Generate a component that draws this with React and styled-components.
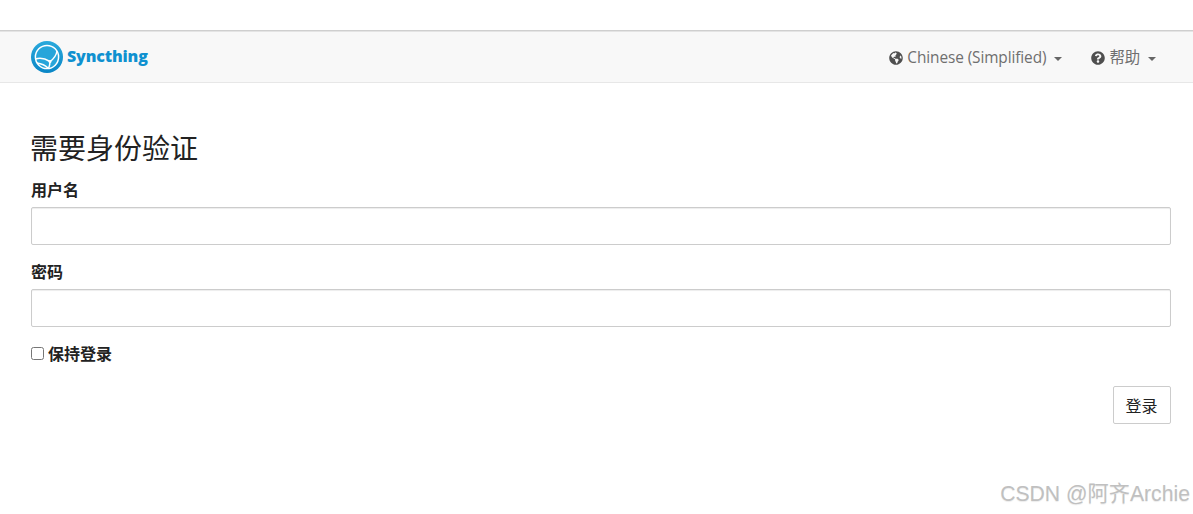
import styled, { createGlobalStyle } from "styled-components"
import { FaGlobeAmericas, FaQuestionCircle } from "react-icons/fa"

const GlobalStyle = createGlobalStyle`
  html, body {
    margin: 0;
    padding: 0;
    background: #fff;
  }
  body {
    font-family: "Open Sans", "Noto Sans CJK SC", "Liberation Sans", sans-serif;
    font-size: 16px;
    color: #222;
  }
`

const Logo = () => (
  <svg width="32" height="32" viewBox="0 0 32 32" aria-hidden="true">
    <defs>
      <linearGradient id="syncBlue" x1="0" y1="0" x2="0" y2="1">
        <stop offset="0" stopColor="#2aa9dc" />
        <stop offset="1" stopColor="#0a86c6" />
      </linearGradient>
    </defs>
    <circle cx="16" cy="16" r="16" fill="url(#syncBlue)" />
    <circle cx="16" cy="16" r="11.6" fill="#27a5da" stroke="#fff" strokeWidth="1.5" />
    <path
      d="M4.6 18C9 16.5 14 17.5 19 20.5C22.5 18 25.5 13.5 26 10M19 20.5C19 23 18.5 25 17.5 27.5M6 22C10 22.5 14 24 17.5 27.5"
      fill="none"
      stroke="#fff"
      strokeWidth="1.5"
    />
    <circle cx="19" cy="20.5" r="1.5" fill="#fff" />
  </svg>
)

const Page = () => (
  <Wrapper>
    <Navbar>
      <Brand href="#">
        <Logo />
        <BrandName>Syncthing</BrandName>
      </Brand>
      <NavMenu>
        <NavItem>
          <FaGlobeAmericas />
          <span>Chinese (Simplified)</span>
          <Caret />
        </NavItem>
        <NavItem>
          <FaQuestionCircle />
          <span>帮助</span>
          <Caret />
        </NavItem>
      </NavMenu>
    </Navbar>
    <Main>
      <Title>需要身份验证</Title>
      <Field>
        <Label htmlFor="user">用户名</Label>
        <Input id="user" type="text" />
      </Field>
      <Field>
        <Label htmlFor="password">密码</Label>
        <Input id="password" type="password" />
      </Field>
      <Remember>
        <input type="checkbox" />
        保持登录
      </Remember>
      <Actions>
        <Button type="button">登录</Button>
      </Actions>
    </Main>
    <Watermark>CSDN @阿齐Archie</Watermark>
  </Wrapper>
)

export default function App() {
  return (
    <>
      <GlobalStyle />
      <Page />
    </>
  )
}

const Wrapper = styled.div`
  position: relative;
  height: 514px;
  padding-top: 30px;
  box-sizing: border-box;
  overflow: hidden;
`

const Navbar = styled.nav`
  height: 53px;
  box-sizing: border-box;
  display: flex;
  align-items: center;
  justify-content: space-between;
  padding: 0 37px 0 31px;
  background: #f8f8f8;
  border-top: 1px solid #cfcfcf;
  border-bottom: 1px solid #e7e7e7;
  box-shadow: inset 0 1px 0 #e4e4e4;
`

const Brand = styled.a`
  display: flex;
  align-items: center;
  gap: 4px;
  text-decoration: none;
`

const BrandName = styled.span`
  margin-bottom: 2px;
  font-family: "Open Sans", sans-serif;
  font-weight: 800;
  font-size: 16px;
  letter-spacing: -0.15px;
  color: #0f91d0;
`

const NavMenu = styled.div`
  display: flex;
  align-items: center;
  gap: 29px;
  padding-top: 2px;
`

const NavItem = styled.div`
  display: flex;
  align-items: center;
  color: #6f6f6f;
  font-size: 15.4px;
  line-height: 22px;
  letter-spacing: -0.1px;

  svg {
    width: 14px;
    height: 14px;
    margin-right: 4px;
    color: #4f4f4f;
  }
`

const Caret = styled.i`
  width: 0;
  height: 0;
  margin-left: 8px;
  margin-top: 2px;
  border-top: 4px solid #666;
  border-left: 4px solid transparent;
  border-right: 4px solid transparent;
`

const Main = styled.main`
  padding: 46px 22px 0 31px;
`

const Title = styled.h1`
  margin: 0 0 12px -1px;
  font-size: 28px;
  line-height: 38px;
  font-weight: 400;
  color: #222;
`

const Field = styled.div`
  margin-bottom: 16px;
`

const Label = styled.label`
  display: block;
  margin-bottom: 6px;
  font-size: 16px;
  line-height: 22px;
  font-weight: 700;
  color: #222;
`

const Input = styled.input`
  display: block;
  width: 100%;
  height: 38px;
  box-sizing: border-box;
  background: #fff;
  border: 1px solid #ccc;
  border-radius: 2px;
  box-shadow: inset 0 1px 1px rgba(0, 0, 0, 0.075);
`

const Remember = styled.label`
  display: flex;
  align-items: center;
  gap: 4px;
  font-size: 16px;
  line-height: 22px;
  font-weight: 700;
  color: #222;

  input {
    width: 13px;
    height: 13px;
    margin: 0 0 2px;
  }
`

const Actions = styled.div`
  display: flex;
  justify-content: flex-end;
  margin-top: 21px;
`

const Button = styled.button`
  width: 58px;
  height: 38px;
  padding: 0 1px 1px 0;
  background: #fff;
  border: 1px solid #ccc;
  border-radius: 2px;
  font-family: "Noto Sans CJK SC", sans-serif;
  font-size: 16px;
  color: #222;
`

const Watermark = styled.div`
  position: absolute;
  right: 3px;
  top: 479px;
  font-family: "Liberation Sans", "Noto Sans CJK SC", sans-serif;
  font-size: 21.2px;
  line-height: 30px;
  color: #c0c0c0;
  text-shadow: 0 1px 1px rgba(0, 0, 0, 0.08);
  white-space: nowrap;
`
